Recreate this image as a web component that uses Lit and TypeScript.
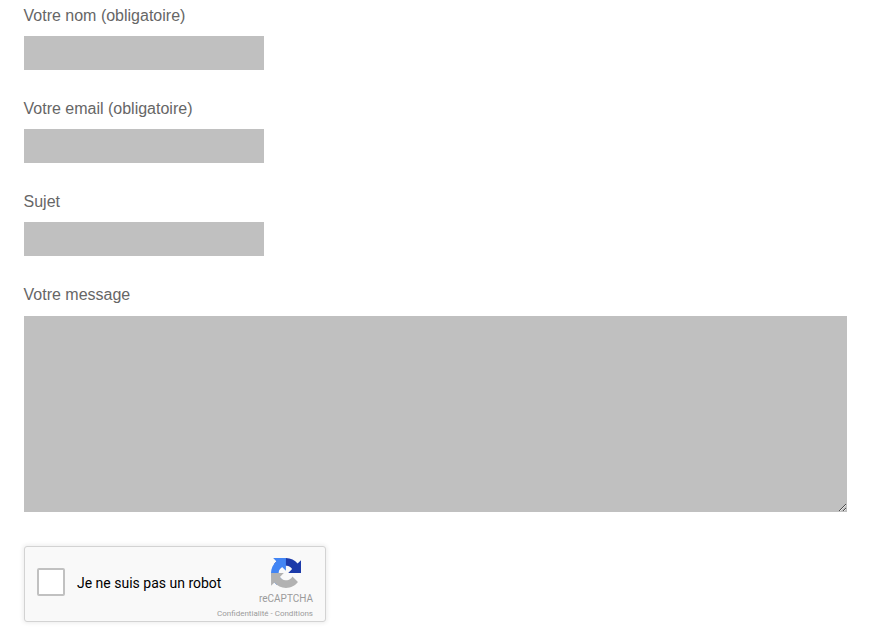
import { LitElement, html, css } from "lit";
import { customElement } from "lit/decorators.js";

@customElement("captcha-box")
class CaptchaBox extends LitElement {
  static styles = css`
    :host {
      display: block;
      width: 302px;
    }
    .box {
      box-sizing: border-box;
      width: 302px;
      height: 76px;
      display: flex;
      justify-content: space-between;
      border: 1px solid #d3d3d3;
      border-radius: 3px;
      background: #f9f9f9;
      box-shadow: 0 0 4px 1px rgba(0, 0, 0, 0.08);
      font-family: Roboto, "Liberation Sans", sans-serif;
    }
    .check {
      display: flex;
      align-items: flex-start;
      padding: 21px 0 0 12px;
      gap: 12px;
      font-size: 14px;
      line-height: 17px;
      color: #000;
      white-space: nowrap;
    }
    .tick {
      box-sizing: border-box;
      width: 28px;
      height: 28px;
      border: 2px solid #c1c1c1;
      border-radius: 2px;
      background: #fff;
    }
    .caption {
      padding-top: 7px;
    }
    .brand {
      display: flex;
      flex-direction: column;
      align-items: flex-end;
      box-sizing: border-box;
      width: 78px;
      padding: 11px 12px 0 0;
      color: #9b9b9b;
      white-space: nowrap;
    }
    .logo {
      display: block;
      width: 30px;
      height: 30px;
      margin-right: 12px;
    }
    .name {
      margin-top: 5px;
      font-size: 10px;
      line-height: 12px;
    }
    .links {
      margin-top: 4px;
      font-size: 8px;
      line-height: 10px;
    }
  `;

  render() {
    return html`
      <div class="box">
        <div class="check">
          <span class="tick" role="checkbox" aria-checked="false"></span>
          <span class="caption">Je ne suis pas un robot</span>
        </div>
        <div class="brand">
          <svg class="logo" viewBox="0 0 64 64" aria-hidden="true">
            <path fill="#1c3aa9" d="M64 31.955l-.033-1.37V4.687l-7.16 7.16C50.948 4.674 42.033.093 32.093.093c-10.4 0-19.622 4.96-25.458 12.64l11.736 11.86a15.55 15.55 0 0 1 4.754-5.334c2.05-1.6 4.952-2.906 8.968-2.906.485 0 .86.057 1.135.163 4.976.393 9.288 3.14 11.828 7.124l-8.307 8.307L64 31.953"/>
            <path fill="#4285f4" d="M31.862.094l-1.37.033H4.594l7.16 7.16C4.58 13.147 0 22.06 0 32c0 10.4 4.96 19.622 12.64 25.458L24.5 45.722a15.55 15.55 0 0 1-5.334-4.754c-1.6-2.05-2.906-4.955-2.906-8.97 0-.485.057-.86.163-1.135.393-4.976 3.14-9.288 7.124-11.828l8.307 8.307L31.86.095"/>
            <path fill="#b2b2b2" d="M.095 32.05l.033 1.37v25.898l7.16-7.16c5.86 7.173 14.774 11.754 24.713 11.754 10.4 0 19.622-4.96 25.458-12.64l-11.736-11.86a15.55 15.55 0 0 1-4.754 5.334c-2.05 1.6-4.952 2.906-8.968 2.906-.485 0-.86-.057-1.135-.163-4.976-.393-9.288-3.14-11.828-7.124l8.307-8.307c-10.522.04-22.4.066-27.295-.005"/>
          </svg>
          <div class="name">reCAPTCHA</div>
          <div class="links">Confidentialité - Conditions</div>
        </div>
      </div>
    `;
  }
}

@customElement("app-root")
class AppRoot extends LitElement {
  static styles = css`
    :host {
      display: block;
      box-sizing: border-box;
      height: 636px;
      overflow: hidden;
      padding: 4px 24px 0;
      background: #fff;
      color: #666;
      font: 16px/24px "Liberation Sans", Arial, sans-serif;
    }
    .field {
      display: block;
      height: 93px;
    }
    .label {
      display: block;
      height: 32px;
      margin-left: -0.5px;
    }
    .input,
    .area {
      display: block;
      box-sizing: border-box;
      margin: 0;
      padding: 8px;
      border: 0;
      border-radius: 0;
      outline: 0;
      background: #c0c0c0;
      color: inherit;
      font: inherit;
    }
    .input {
      width: 240px;
      height: 34px;
    }
    .message {
      height: 263px;
    }
    .message .label {
      height: 33px;
    }
    .area {
      width: 823px;
      height: 196px;
      resize: both;
    }
    captcha-box {
      margin-top: -1px;
      padding-top: 1px;
    }
  `;

  render() {
    const fields = ["Votre nom (obligatoire)", "Votre email (obligatoire)", "Sujet"];
    return html`
      ${fields.map(
        (text) => html`<label class="field"><span class="label">${text}</span><input class="input" /></label>`
      )}
      <label class="field message"><span class="label">Votre message</span><textarea class="area"></textarea></label>
      <captcha-box></captcha-box>
    `;
  }
}
